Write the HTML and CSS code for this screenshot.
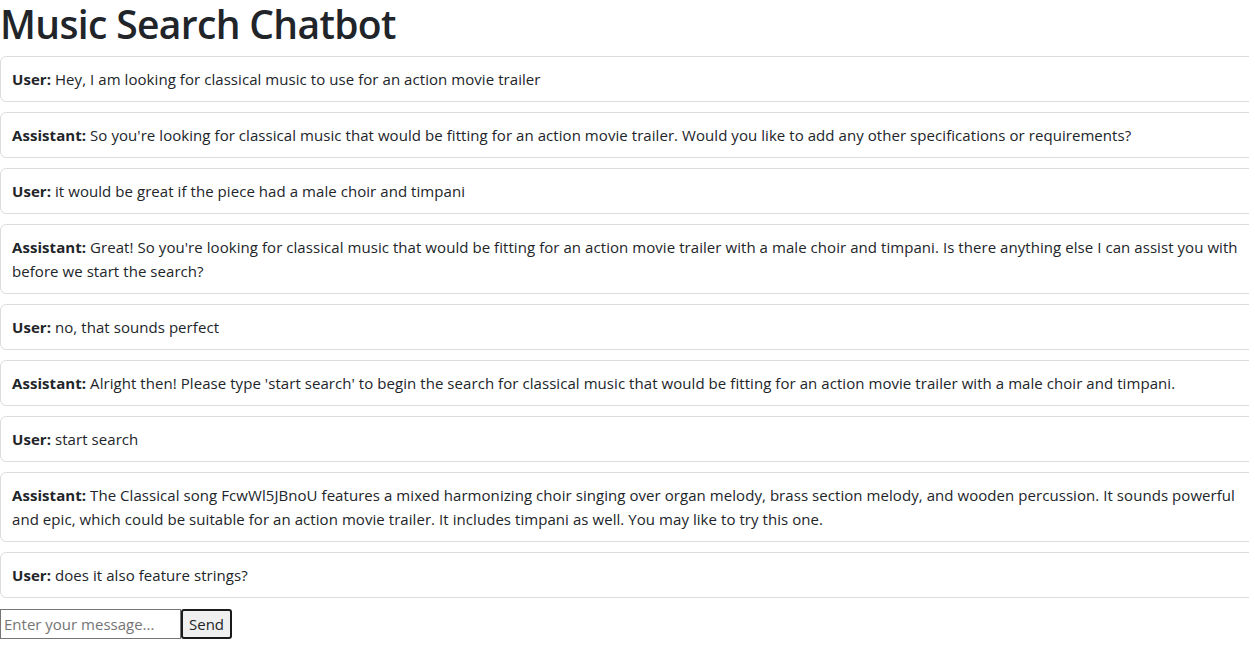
FILE: index.html
```html
<!DOCTYPE html>
<html lang="en">
<head>
<meta charset="utf-8">
<title>Music Search Chatbot</title>
<link rel="stylesheet" href="styles.css">
</head>
<body>
<h1 class="title">Music Search Chatbot</h1>
<div class="chat">
  <div class="msg"><strong>User:</strong> Hey, I am looking for classical music to use for an action movie trailer</div>
  <div class="msg"><strong>Assistant:</strong> So you're looking for classical music that would be fitting for an action movie trailer. Would you like to add any other specifications or requirements?</div>
  <div class="msg"><strong>User:</strong> it would be great if the piece had a male choir and timpani</div>
  <div class="msg"><strong>Assistant:</strong> Great! So you're looking for classical music that would be fitting for an action movie trailer with a male choir and timpani. Is there anything else I can assist you with before we start the search?</div>
  <div class="msg"><strong>User:</strong> no, that sounds perfect</div>
  <div class="msg"><strong>Assistant:</strong> Alright then! Please type 'start search' to begin the search for classical music that would be fitting for an action movie trailer with a male choir and timpani.</div>
  <div class="msg"><strong>User:</strong> start search</div>
  <div class="msg"><strong>Assistant:</strong> The Classical song FcwWl5JBnoU features a mixed harmonizing choir singing over organ melody, brass section melody, and wooden percussion. It sounds powerful and epic, which could be suitable for an action movie trailer. It includes timpani as well. You may like to try this one.</div>
  <div class="msg"><strong>User:</strong> does it also feature strings?</div>
</div>
<form class="composer">
  <input class="input" type="text" placeholder="Enter your message...">
  <button class="send" type="button">Send</button>
</form>
</body>
</html>
```
FILE: styles.css
```css
html, body {
  margin: 0;
  padding: 0;
  overflow: hidden;
}
body {
  font-family: "Open Sans", "Liberation Sans", sans-serif;
  font-size: 15px;
  line-height: 24px;
  letter-spacing: 0.06px;
  color: #212529;
  background: #fff;
}
.title {
  margin: 0 0 8px 0;
  font-size: 39px;
  line-height: 48px;
  font-weight: 600;
  letter-spacing: -0.65px;
}
.chat {
  margin-right: -13px;
  display: flex;
  flex-direction: column;
  gap: 10px;
}
.msg {
  border: 1px solid #dcdcdc;
  border-radius: 6px;
  padding: 10px 11px;
}
.msg strong {
  font-weight: 700;
}
.composer {
  margin-top: 11px;
  display: flex;
  align-items: stretch;
}
.input {
  width: 181px;
  height: 30px;
  box-sizing: border-box;
  border: 1px solid #767676;
  border-radius: 0;
  padding: 1px 3px;
  font: inherit;
  color: #212529;
}
.input::placeholder {
  color: #757575;
}
.send {
  margin-left: 0;
  height: 30px;
  box-sizing: border-box;
  border: 2px solid #1a1a1a;
  border-radius: 3px;
  background: #efefef;
  padding: 0 6px;
  font: inherit;
  color: #212529;
}
```
